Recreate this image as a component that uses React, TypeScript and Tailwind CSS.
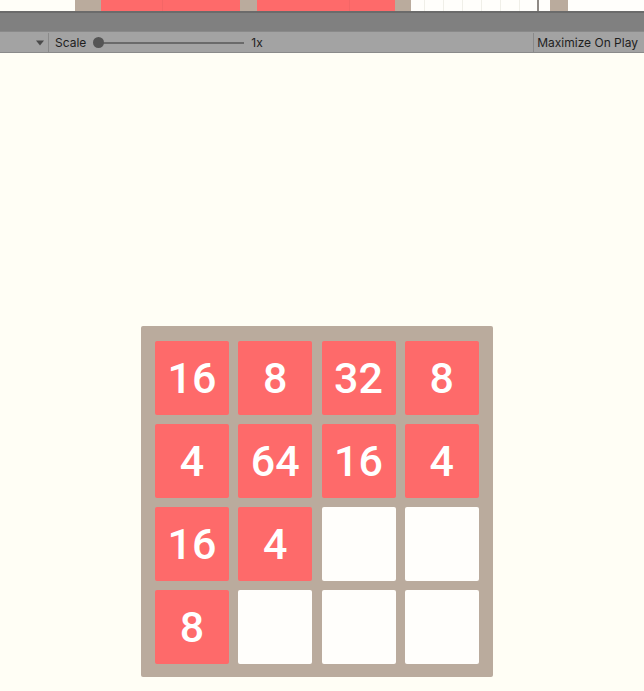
const tiles: (number | null)[] = [16, 8, 32, 8, 4, 64, 16, 4, 16, 4, null, null, 8, null, null, null]

function Tile({ value }: { value: number | null }) {
  if (value === null) {
    return <div className="h-[74px] w-[74px] rounded-[2px] bg-[#fffefb]" />
  }
  return (
    <div className="flex h-[74px] w-[74px] items-center justify-center rounded-[2px] bg-[#fe6a6a] text-[43px] font-medium text-white [font-family:Roboto,'Liberation_Sans',sans-serif]">
      {value}
    </div>
  )
}

export default function App() {
  return (
    <div className="flex h-[691px] w-[644px] flex-col overflow-hidden bg-[#fffef5] [font-family:Inter,'Noto_Sans',sans-serif]">
      {/* cropped game view from above */}
      <div className="flex h-[11px] shrink-0 bg-[#fffef8]">
        <div className="w-[75px]" />
        <div className="w-[26px] bg-[#baab9d]" />
        <div className="flex w-[139px] bg-[#fe6a6a]">
          <div className="w-[62px] border-r border-[#f46666]" />
        </div>
        <div className="w-[17px] bg-[#baab9d]" />
        <div className="flex w-[138px] bg-[#fe6a6a]">
          <div className="w-[93px] border-r border-[#f46666]" />
        </div>
        <div className="w-[16px] bg-[#baab9d]" />
        <div className="flex w-[126px] bg-[#fffefb]">
          <div className="w-[14px] border-r border-[#f0efe8]" />
          <div className="w-[19px] border-r border-[#f0efe8]" />
          <div className="w-[19px] border-r border-[#f0efe8]" />
          <div className="w-[19px] border-r border-[#f0efe8]" />
          <div className="w-[19px] border-r border-[#f0efe8]" />
          <div className="w-[19px] border-r border-[#f0efe8]" />
        </div>
        <div className="w-[2px] bg-[#8f8a85]" />
        <div className="w-[11px] bg-[#fffefb]" />
        <div className="w-[18px] bg-[#baab9d]" />
        <div className="flex-1 bg-[#fffefb]" />
      </div>

      {/* panel header strip */}
      <div className="h-[20px] shrink-0 border-t-2 border-[#6b6b6b] bg-[#808080]" />

      {/* game view toolbar */}
      <div className="flex h-[22px] shrink-0 items-center border-y border-[#8a8a8a] bg-[#a3a3a3] pt-[1px] text-[12px] text-[#1e1e1e]">
        <div className="flex h-full w-[49px] items-center justify-end border-r border-[#8a8a8a] pr-[4px]">
          <svg width="8" height="6" viewBox="0 0 8 6">
            <path d="M0 0.5 L8 0.5 L4 5.5 Z" fill="#4a4a4a" />
          </svg>
        </div>
        <span className="ml-[6px]">Scale</span>
        <div className="relative ml-[8px] flex h-full w-[150px] items-center">
          <div className="h-[2px] w-full bg-[#6a6a6a]" />
          <div className="absolute left-[-1px] h-[11px] w-[11px] rounded-full bg-[#555555]" />
        </div>
        <span className="ml-[7px]">1x</span>
        <div className="flex-1" />
        <div className="flex h-full items-center border-l border-[#8a8a8a] pl-[3px] pr-[6px]">Maximize On Play</div>
      </div>

      {/* game board */}
      <div className="flex flex-1">
        <div className="ml-[141px] mt-[273px] grid h-[351px] w-[352px] grid-cols-4 content-start gap-x-[9px] gap-y-[9px] rounded-[2px] bg-[#baab9d] px-[14px] pt-[15px]">
          {tiles.map((t, i) => (
            <Tile key={i} value={t} />
          ))}
        </div>
      </div>
    </div>
  )
}
